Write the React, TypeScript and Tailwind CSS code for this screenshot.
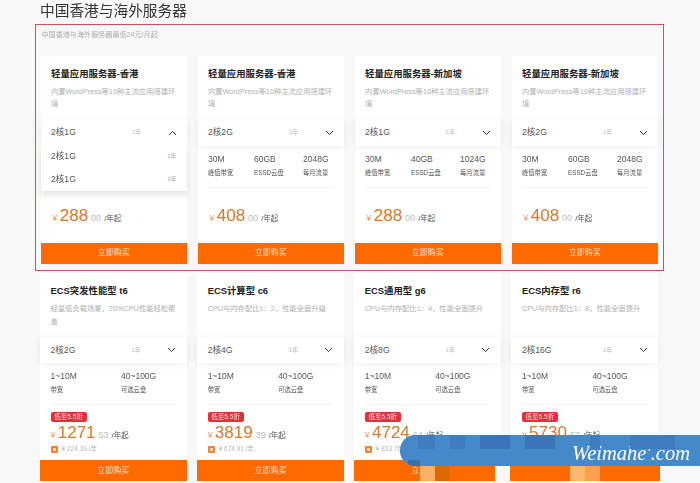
const FONT = "font-['Liberation_Sans','Noto_Sans_CJK_SC',sans-serif]";

type Spec = { value: string; label: string };

interface Plan {
  title: string;
  desc: string;
  cfg: string;
  specs: Spec[];
  price: string;
  cents: string;
  open?: boolean;
  promo?: string;
}

const desc = '内置WordPress等10种主流应用搭建环境';

const topPlans: Plan[] = [
  {
    title: '轻量应用服务器-香港',
    desc,
    cfg: '2核1G',
    open: true,
    specs: [],
    price: '288',
    cents: '00',
  },
  {
    title: '轻量应用服务器-香港',
    desc,
    cfg: '2核2G',
    specs: [
      { value: '30M', label: '峰值带宽' },
      { value: '60GB', label: 'ESSD云盘' },
      { value: '2048G', label: '每月流量' },
    ],
    price: '408',
    cents: '00',
  },
  {
    title: '轻量应用服务器-新加坡',
    desc,
    cfg: '2核1G',
    specs: [
      { value: '30M', label: '峰值带宽' },
      { value: '40GB', label: 'ESSD云盘' },
      { value: '1024G', label: '每月流量' },
    ],
    price: '288',
    cents: '00',
  },
  {
    title: '轻量应用服务器-新加坡',
    desc,
    cfg: '2核2G',
    specs: [
      { value: '30M', label: '峰值带宽' },
      { value: '60GB', label: 'ESSD云盘' },
      { value: '2048G', label: '每月流量' },
    ],
    price: '408',
    cents: '00',
  },
];

const ecsSpecs: Spec[] = [
  { value: '1~10M', label: '带宽' },
  { value: '40~100G', label: '可选云盘' },
];

const ecsPlans: Plan[] = [
  {
    title: 'ECS突发性能型 t6',
    desc: '轻量低负载场景，20%CPU性能轻松覆盖',
    cfg: '2核2G',
    specs: ecsSpecs,
    price: '1271',
    cents: '53',
    promo: '¥ 224.39 /年',
  },
  {
    title: 'ECS计算型 c6',
    desc: 'CPU与内存配比1：2，性能全面升级',
    cfg: '2核4G',
    specs: ecsSpecs,
    price: '3819',
    cents: '39',
    promo: '¥ 674.91 /年',
  },
  {
    title: 'ECS通用型 g6',
    desc: 'CPU与内存配比1：4，性能全面提升',
    cfg: '2核8G',
    specs: ecsSpecs,
    price: '4724',
    cents: '64',
    promo: '¥ 833.76 /年',
  },
  {
    title: 'ECS内存型 r6',
    desc: 'CPU与内存配比1：8，性能全面提升',
    cfg: '2核16G',
    specs: ecsSpecs,
    price: '5730',
    cents: '57',
    promo: '¥ 1011.36 /年',
  },
];

function Chevron({ up }: { up?: boolean }) {
  return (
    <svg width="9" height="6" viewBox="0 0 9 6" fill="none" stroke="#333" strokeWidth="1">
      <path d={up ? 'M1 5l3.5-3.5L8 5' : 'M1 1l3.5 3.5L8 1'} />
    </svg>
  );
}

function PlanCard({ plan }: { plan: Plan }) {
  const isEcs = !!plan.promo;
  return (
    <div className="relative flex h-[208px] flex-col bg-white">
      <div className="h-[64px] px-[10.5px] pt-[11px]">
        <h3 className="text-[9.4px] leading-[14px] font-bold text-[#222]">{plan.title}</h3>
        <p className="mt-[5px] text-[7.3px] leading-[12.5px] text-[#b0b0b0]">{plan.desc}</p>
      </div>

      <div className="flex h-[26px] items-center bg-white px-[10.5px] shadow-[0_1px_8px_rgba(0,0,0,0.07)]">
        <span className="w-[81px] text-[8.6px] text-[#555]">{plan.cfg}</span>
        <span className="flex-1 text-[6px] text-[#bbb]">1年</span>
        <Chevron up={plan.open} />
      </div>

      {plan.open ? (
        <div className="absolute top-[89px] left-0 z-10 h-[46px] w-full bg-white shadow-[0_4px_6px_rgba(0,0,0,0.1)]">
          <div className="flex h-[23px] items-center justify-between px-[10.5px]">
            <span className="text-[8.6px] text-[#555]">2核1G</span>
            <span className="text-[6px] text-[#aaa]">1年</span>
          </div>
          <div className="flex h-[23px] items-center justify-between px-[10.5px]">
            <span className="text-[8.6px] text-[#555]">2核1G</span>
            <span className="text-[6px] text-[#aaa]">3年</span>
          </div>
        </div>
      ) : null}

      <div className="mx-[10.5px] flex h-[42px] items-start border-b border-[#f5f5f5] pt-[6px]">
        {plan.specs.map((s, i) => (
          <div
            key={s.value}
            className={`shrink-0 ${isEcs ? 'w-[70.5px]' : i === 0 ? 'w-[46px]' : i === 1 ? 'w-[49px]' : ''}`}
          >
            <div className="text-[8.5px] leading-[14px] text-[#555]">{s.value}</div>
            <div className="text-[6.3px] leading-[14px] text-[#555]">{s.label}</div>
          </div>
        ))}
      </div>

      {isEcs ? (
        <div className="flex-1 px-[10.5px] pt-[7px]">
          <span className="block h-[10px] w-[36px] rounded-[2px] bg-[#e0323c] text-center text-[6.5px] leading-[10px] text-[#ffe0e0]">
            低至5.5折
          </span>
          <div className="mt-[1px]">
            <PriceLine plan={plan} />
          </div>
          <div className="mt-[2px] flex items-center gap-[4px]">
            <span className="flex h-[7px] w-[7px] items-center justify-center rounded-[1px] bg-[#ee8236]">
              <span className="h-[3px] w-[3px] bg-[#fbd9bd]" />
            </span>
            <span className="text-[6.5px] leading-[8px] text-[#b4b4b4]">{plan.promo}</span>
          </div>
        </div>
      ) : (
        <div className="flex flex-1 items-start px-[12px] pt-[18px]">
          <PriceLine plan={plan} />
        </div>
      )}

      <button className="h-[21px] w-full bg-[#ff6a00] text-[8px] text-[#ffe8d4]">立即购买</button>
    </div>
  );
}

function PriceLine({ plan }: { plan: Plan }) {
  return (
    <div className="flex h-[20px] items-baseline text-[#d9772c]">
      <span className="mr-[2.5px] text-[8.5px] text-[#e09a60]">¥</span>
      <span className="text-[17px] leading-[20px] font-normal">{plan.price}</span>
      <span className="ml-[3px] text-[9px] text-[#bbb]">{plan.cents}</span>
      <span className="ml-[3px] text-[7.5px] text-[#555]">/年起</span>
    </div>
  );
}

// the blue strip and its mosaic blocks from the screenshot's watermark
function Watermark() {
  return (
    <div className="absolute top-[435px] left-[400px] h-[48px] w-[300px]">
      <div className="relative flex h-[31px] items-center justify-end overflow-hidden rounded-l-[15px] bg-[#4589c8] pr-[10px]">
        <div className="absolute top-[25px] left-[8px] h-[6px] w-[12px] bg-[#3a70a8]" />
        <span className="pt-[5px] font-['Liberation_Serif',serif] text-[20.5px] text-white italic">Weimahe'.com</span>
      </div>
      <div className="absolute top-0 left-[18px] h-[14px] w-[17px] bg-[#3f7dc0]" />
      <div className="absolute top-0 left-[50px] h-[14px] w-[15px] bg-[#3f7dc0]" />
      <div className="absolute top-0 left-[80px] h-[14px] w-[30px] bg-[#3a74ba]" />
      <div className="absolute top-0 left-[125px] h-[14px] w-[30px] bg-[#3a74ba]" />
      <div className="absolute top-0 left-[190px] h-[14px] w-[10px] bg-[#3f7dc0]" />
      <div className="absolute top-0 left-[230px] h-[14px] w-[45px] bg-[#3f7dc0]" />
      <div className="absolute top-[31px] left-[20px] h-[15px] w-[75px] bg-[#ff6a00]" />
      <div className="absolute top-[31px] left-[110px] h-[15px] w-[150px] bg-[#ff6a00]" />
      <div className="absolute top-[31px] left-[95px] h-[17px] w-[15px] bg-[#f8f8f8]" />
      <div className="absolute top-[31px] left-[20px] h-[15px] w-[15px] bg-[#ffb266]" />
      <div className="absolute top-[31px] left-[35px] h-[15px] w-[15px] bg-[#dd6a00]" />
      <div className="absolute top-[31px] left-[170px] h-[15px] w-[15px] bg-[#ffb870]" />
      <div className="absolute top-[31px] left-[185px] h-[15px] w-[15px] bg-[#ffa050]" />
    </div>
  );
}

export default function App() {
  return (
    <div className={`relative h-[483px] w-[700px] overflow-hidden bg-[#f8f8f8] ${FONT}`}>
      <div className="blur-[0.35px]">
        <div className="px-[40px] pt-[2px]">
          <h2 className="text-[14.7px] leading-[18px] font-normal text-[#333]">中国香港与海外服务器</h2>
        </div>

        <div className="mx-[35px] mt-[4px] h-[247px] w-[629px] border border-[#d0505c] pt-[4.5px] pr-[5px] pl-[4.5px]">
          <p className="pl-[1px] text-[7.1px] leading-[10px] text-[#aaa]">中国香港与海外服务器最低24元/月起</p>
          <div className="mt-[16px] grid grid-cols-4 gap-x-[10.5px]">
            {topPlans.map((p, i) => (
              <PlanCard key={i} plan={p} />
            ))}
          </div>
        </div>

        <div className="mx-[40px] mt-[2px] grid w-[618px] grid-cols-4 gap-x-[10.5px]">
          {ecsPlans.map(p => (
            <PlanCard key={p.title} plan={p} />
          ))}
        </div>
      </div>

      <Watermark />
    </div>
  );
}
